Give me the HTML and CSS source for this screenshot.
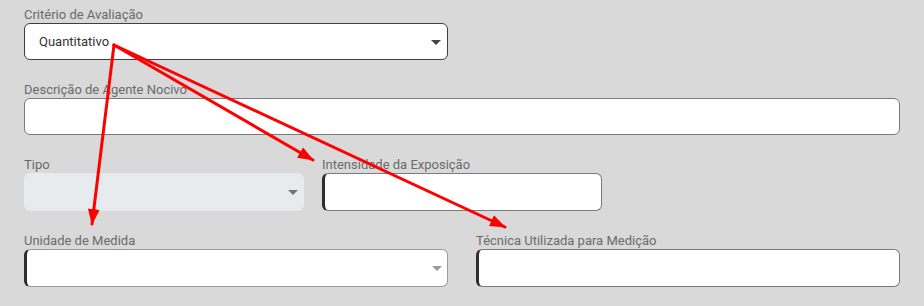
FILE: index.html
```html
<!DOCTYPE html>
<html lang="pt-BR">
<head>
<meta charset="utf-8">
<title>Critério de Avaliação</title>
<link rel="stylesheet" href="styles.css">
</head>
<body>
<div class="page">
  <form class="form">
    <div class="field field--half">
      <label class="label">Critério de Avaliação</label>
      <div class="control control--select control--dark">
        <span class="value">Quantitativo</span>
        <span class="caret caret--dark"></span>
      </div>
    </div>

    <div class="field field--full">
      <label class="label">Descrição de Agente Nocivo</label>
      <div class="control control--input"></div>
    </div>

    <div class="row row--split">
      <div class="field">
        <label class="label">Tipo</label>
        <div class="control control--disabled tall">
          <span class="caret caret--muted"></span>
        </div>
      </div>
      <div class="field">
        <label class="label">Intensidade da Exposição</label>
        <div class="control control--input control--required tall"></div>
      </div>
    </div>

    <div class="row row--halves">
      <div class="field">
        <label class="label">Unidade de Medida</label>
        <div class="control control--select control--light control--required tall">
          <span class="caret caret--light"></span>
        </div>
      </div>
      <div class="field">
        <label class="label">Técnica Utilizada para Medição</label>
        <div class="control control--input control--required tall"></div>
      </div>
    </div>
  </form>

  <svg class="arrows" width="924" height="306" viewBox="0 0 924 306" aria-hidden="true">
    <defs>
      <marker id="head" markerUnits="userSpaceOnUse" markerWidth="16" markerHeight="12" refX="15" refY="6" orient="auto">
        <path d="M0,0 L16,6 L0,12 z" fill="#ff0000"/>
      </marker>
    </defs>
    <g stroke="#ff0000" stroke-width="3" fill="none" stroke-linecap="round">
      <line x1="114" y1="45" x2="92" y2="224" marker-end="url(#head)"/>
      <line x1="114" y1="45" x2="313" y2="160" marker-end="url(#head)"/>
      <line x1="114" y1="45" x2="505" y2="227" marker-end="url(#head)"/>
    </g>
  </svg>
</div>
</body>
</html>
```

FILE: styles.css
```css
* { box-sizing: border-box; }

html, body {
  margin: 0;
  padding: 0;
  background: #d9d9d9;
}

body {
  font-family: Roboto, "Liberation Sans", Arial, sans-serif;
  width: 924px;
  height: 306px;
  overflow: hidden;
}

.page {
  position: relative;
  width: 924px;
  height: 306px;
}

.form {
  display: flex;
  flex-direction: column;
  gap: 22px;
  padding: 7px 0 0 24px;
  width: 900px;
}

.field {
  display: flex;
  flex-direction: column;
}

.field--half { width: 424px; }
.field--full { width: 876px; }

.row {
  display: grid;
}

.row--split {
  grid-template-columns: 280px 280px;
  column-gap: 18px;
}

.row--halves {
  grid-template-columns: 424px 424px;
  column-gap: 28px;
}

.label {
  display: block;
  height: 16px;
  line-height: 16px;
  font-size: 13px;
  color: #6b6b6b;
  white-space: nowrap;
}

.control {
  position: relative;
  height: 37px;
  border-radius: 6px;
  background: #ffffff;
  display: flex;
  align-items: center;
}

.control.tall { height: 38px; }

.control--dark { border: 1px solid #3f3f3f; }

.control--input { border: 1px solid #7a7a7a; }

.control--light { border: 1px solid #9a9a9a; }

.control--required { border-left: 3px solid #2e2e2e; }

.control--disabled {
  background: #e8ebee;
  border: none;
}

.value {
  padding-left: 14px;
  font-size: 13px;
  color: #333333;
}

.caret {
  position: absolute;
  right: 6px;
  top: 50%;
  margin-top: -2px;
  width: 0;
  height: 0;
  border-left: 5px solid transparent;
  border-right: 5px solid transparent;
  border-top: 5px solid #444;
}

.caret--dark { border-top-color: #444444; right: 6px; }
.caret--muted { border-top-color: #6e7781; right: 6px; }
.caret--light { border-top-color: #9a9a9a; right: 5px; }

.arrows {
  position: absolute;
  left: 0;
  top: 0;
  pointer-events: none;
}
```
